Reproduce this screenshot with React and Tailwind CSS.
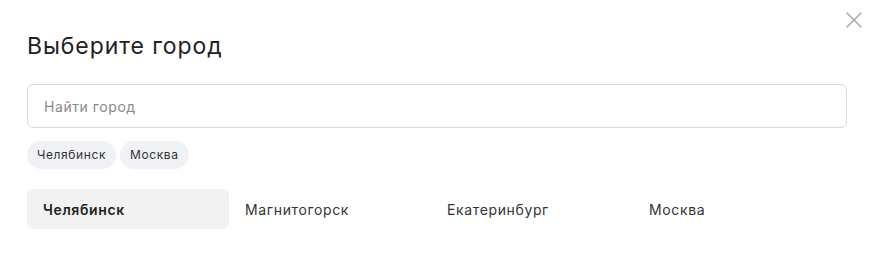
import { X } from 'lucide-react';

const cities = ['Челябинск', 'Магнитогорск', 'Екатеринбург', 'Москва'];
const recent = ['Челябинск', 'Москва'];

export default function App() {
  return (
    <div
      className="relative w-[875px] h-[260px] bg-white text-[#222] px-[27px] pt-[30px]"
      style={{ fontFamily: 'Inter, "Noto Sans", sans-serif' }}
    >
      {/* Close */}
      <button className="absolute right-[7px] top-[6px] text-[#ababab]" aria-label="Закрыть">
        <X size={28} strokeWidth={1.3} />
      </button>

      <h2 className="text-[23px] leading-[32px] font-normal tracking-[0.04em] text-[#222]">Выберите город</h2>

      <input
        type="text"
        placeholder="Найти город"
        className="mt-[22px] w-[820px] h-[44px] rounded-[6px] border border-[#d9d9d9] px-[16px] text-[14px] tracking-[0.04em] text-[#222] placeholder:text-[#8a8a8a] outline-none"
      />

      {/* Recent cities */}
      <div className="mt-[13px] flex gap-[4px]">
        {recent.map((c) => (
          <span
            key={c}
            className="h-[28px] px-[10px] flex items-center rounded-full bg-[#f0f2f5] text-[12px] tracking-[0.05em] text-[#333]"
          >
            {c}
          </span>
        ))}
      </div>

      {/* City list */}
      <div className="mt-[20px] flex">
        {cities.map((c, i) => (
          <div
            key={c}
            className={`w-[202px] h-[40px] px-[16px] flex items-center rounded-[6px] text-[14px] tracking-[0.045em] ${
              i === 0 ? 'bg-[#f2f2f2] font-semibold text-[#222]' : 'text-[#333]'
            }`}
          >
            {c}
          </div>
        ))}
      </div>
    </div>
  );
}
